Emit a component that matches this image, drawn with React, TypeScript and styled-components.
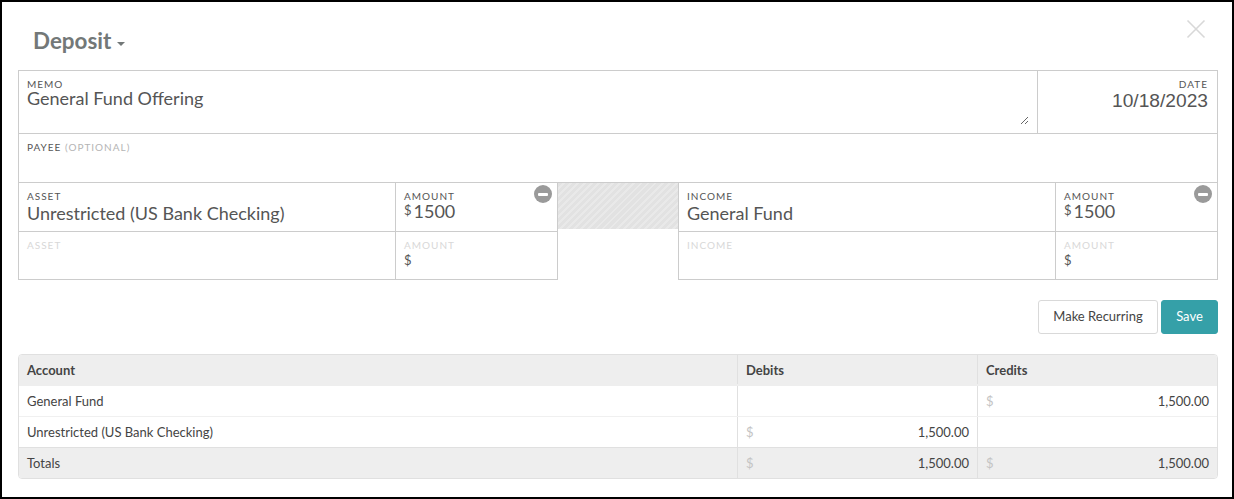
import React from "react";
import styled, { createGlobalStyle } from "styled-components";

const Global = createGlobalStyle`
  html, body { margin: 0; padding: 0; background: #fff; }
  body { font-family: Lato, "Liberation Sans", sans-serif; color: #444; }
`;

const Frame = styled.div`
  box-sizing: border-box;
  width: 1234px;
  height: 499px;
  border: 2px solid #000;
  padding: 0 14px 0 16px;
  background: #fff;
  display: flex;
  flex-direction: column;
`;

const Header = styled.div`
  height: 68px;
  display: flex;
  align-items: flex-start;
  justify-content: space-between;
`;

const Title = styled.div`
  margin: 24px 0 0 15px;
  font-size: 22.4px;
  line-height: 30px;
  font-weight: 700;
  color: #737878;
  display: flex;
  align-items: center;
`;

const Caret = styled.span`
  margin: 5px 0 0 6px;
  border-top: 4px solid #737878;
  border-left: 4px solid transparent;
  border-right: 4px solid transparent;
`;

const Close = styled.svg`
  margin: 17px 12px 0 0;
  display: block;
`;

const Box = styled.div`
  border: 1px solid #ccc;
  border-bottom: 0;
`;

const MemoRow = styled.div`
  display: flex;
  height: 62px;
  border-bottom: 1px solid #ccc;
`;

const MemoCell = styled.div`
  flex: 1;
  position: relative;
  box-sizing: border-box;
  padding: 7px 8px 0;
  display: flex;
  flex-direction: column;
`;

const DateCell = styled.div`
  width: 180px;
  box-sizing: border-box;
  border-left: 1px solid #ccc;
  padding: 7px 9px 0 0;
  text-align: right;
`;

const Label = styled.div<{ $faint?: boolean }>`
  font-size: 10px;
  line-height: 12px;
  letter-spacing: 1px;
  color: ${(p) => (p.$faint ? "#d8d8d8" : "#555")};
`;

const Optional = styled.span`
  color: #b4b4b4;
`;

const MemoInput = styled.textarea`
  flex: 1;
  margin: -2px 0 8px 0;
  padding: 0;
  border: 0;
  outline: 0;
  resize: vertical;
  font-family: Lato, sans-serif;
  font-size: 18px;
  line-height: 20px;
  color: #555;
`;

const DateValue = styled.div`
  font-family: "Liberation Sans", Arial, sans-serif;
  font-size: 19.2px;
  line-height: 22px;
  color: #555;
`;

const PayeeRow = styled.div`
  height: 48px;
  box-sizing: border-box;
  padding: 7px 8px 0;
`;

const Lines = styled.div`
  display: grid;
  grid-template-columns: 540px 120px 540px;
  height: 97px;
`;

const Side = styled.div`
  display: grid;
  grid-template-columns: 376px 1fr;
  grid-template-rows: 49px 47px;
  border: 1px solid #ccc;
`;

const Gap = styled.div`
  border-top: 1px solid #ccc;
  height: 46px;
  background: repeating-linear-gradient(
    135deg,
    #e2e2e2 0,
    #e2e2e2 3px,
    #e9e9e9 3px,
    #e9e9e9 5px
  );
`;

const Cell = styled.div<{ $last?: boolean; $amount?: boolean }>`
  position: relative;
  box-sizing: border-box;
  padding: 7px 8px 0;
  border-bottom: ${(p) => (p.$last ? "0" : "1px solid #ccc")};
  border-left: ${(p) => (p.$amount ? "1px solid #ccc" : "0")};
`;

const Value = styled.div`
  font-size: 18px;
  line-height: 22px;
  color: #555;
`;

const Amount = styled.div`
  display: flex;
  align-items: flex-start;
  margin-top: -2px;
  font-size: 18px;
  line-height: 22px;
  color: #555;
`;

const Dollar = styled.span`
  font-size: 13px;
  line-height: 20px;
  margin-right: 2px;
`;

const EmptyDollar = styled.div`
  font-size: 13px;
  line-height: 20px;
  margin-top: -1px;
  color: #555;
`;

const Remove = styled.span`
  position: absolute;
  top: 2px;
  right: 5px;
  width: 18px;
  height: 18px;
  border-radius: 50%;
  background: #9a9a9a;
  display: flex;
  align-items: center;
  justify-content: center;
  &::before {
    content: "";
    width: 10px;
    height: 3px;
    border-radius: 1px;
    background: #fff;
  }
`;

const Actions = styled.div`
  display: flex;
  justify-content: flex-end;
  gap: 3px;
  margin-top: 21px;
  height: 34px;
`;

const Button = styled.button<{ $primary?: boolean }>`
  box-sizing: border-box;
  height: 34px;
  padding: 0 0 2px;
  width: ${(p) => (p.$primary ? "57px" : "120px")};
  font-family: Lato, sans-serif;
  font-size: 13px;
  border-radius: 3px;
  border: 1px solid ${(p) => (p.$primary ? "#35a0a8" : "#d9d9d9")};
  background: ${(p) => (p.$primary ? "#35a0a8" : "#fff")};
  color: ${(p) => (p.$primary ? "#fff" : "#444")};
`;

const Table = styled.div`
  margin-top: 20px;
  border: 1px solid #e0e0e0;
  border-radius: 4px;
  overflow: hidden;
  font-size: 13px;
  color: #444;
`;

const Row = styled.div<{ $shade?: boolean; $strong?: boolean; $rule?: string }>`
  display: grid;
  grid-template-columns: 718px 240px 1fr;
  height: ${(p) => (p.$rule || p.$strong ? "31px" : "30px")};
  box-sizing: border-box;
  background: ${(p) => (p.$shade ? "#eee" : "#fff")};
  font-weight: ${(p) => (p.$strong ? 700 : 400)};
  padding-bottom: ${(p) => (p.$strong ? "2px" : "0")};
  border-bottom: ${(p) => (p.$rule ? `1px solid ${p.$rule}` : "0")};
`;

const Td = styled.div<{ $sep?: boolean }>`
  display: flex;
  align-items: center;
  justify-content: space-between;
  padding: 0 8px;
  border-left: ${(p) => (p.$sep ? "1px solid #e0e0e0" : "0")};
`;

const Sym = styled.span`
  color: #c4c4c4;
`;

function Money({ v }: { v?: string }) {
  return (
    <Td $sep>
      {v && <Sym>$</Sym>}
      {v && <span>{v}</span>}
    </Td>
  );
}

function LineSide({ name, value }: { name: string; value: string }) {
  return (
    <Side>
      <Cell>
        <Label>{name}</Label>
        <Value>{value}</Value>
      </Cell>
      <Cell $amount>
        <Label>AMOUNT</Label>
        <Amount>
          <Dollar>$</Dollar>1500
        </Amount>
        <Remove />
      </Cell>
      <Cell $last>
        <Label $faint>{name}</Label>
      </Cell>
      <Cell $last $amount>
        <Label $faint>AMOUNT</Label>
        <EmptyDollar>$</EmptyDollar>
      </Cell>
    </Side>
  );
}

export default function App() {
  return (
    <Frame>
      <Global />
      <Header>
        <Title>
          Deposit<Caret />
        </Title>
        <Close width="20" height="20" viewBox="0 0 20 20">
          <path d="M1.5 1.5 L18.5 18.5 M18.5 1.5 L1.5 18.5" stroke="#d8d8d8" strokeWidth="1.6" fill="none" />
        </Close>
      </Header>
      <Box>
        <MemoRow>
          <MemoCell>
            <Label>MEMO</Label>
            <MemoInput defaultValue="General Fund Offering" />
          </MemoCell>
          <DateCell>
            <Label>DATE</Label>
            <DateValue>10/18/2023</DateValue>
          </DateCell>
        </MemoRow>
        <PayeeRow>
          <Label>
            PAYEE <Optional>(OPTIONAL)</Optional>
          </Label>
        </PayeeRow>
      </Box>
      <Lines>
        <LineSide name="ASSET" value="Unrestricted (US Bank Checking)" />
        <Gap />
        <LineSide name="INCOME" value="General Fund" />
      </Lines>
      <Actions>
        <Button>Make Recurring</Button>
        <Button $primary>Save</Button>
      </Actions>
      <Table>
        <Row $shade $strong>
          <Td>Account</Td>
          <Td $sep>Debits</Td>
          <Td $sep>Credits</Td>
        </Row>
        <Row $rule="#f0f0f0">
          <Td>General Fund</Td>
          <Money />
          <Money v="1,500.00" />
        </Row>
        <Row $rule="#e0e0e0">
          <Td>Unrestricted (US Bank Checking)</Td>
          <Money v="1,500.00" />
          <Money />
        </Row>
        <Row $shade>
          <Td>Totals</Td>
          <Money v="1,500.00" />
          <Money v="1,500.00" />
        </Row>
      </Table>
    </Frame>
  );
}
